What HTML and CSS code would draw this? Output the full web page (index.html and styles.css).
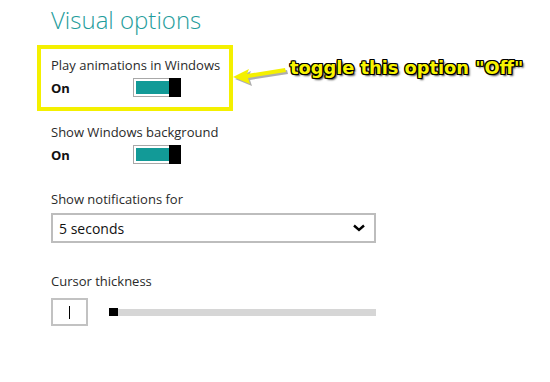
FILE: index.html
```html
<!DOCTYPE html>
<html lang="en">

<head>
    <meta charset="UTF-8">
    <meta name="viewport" content="width=device-width, initial-scale=1.0">
    <title>Visual options</title>
    <link rel="stylesheet" href="styles.css">
</head>

<body>
    <div class="page">
        <h1>Visual options</h1>

        <div class="setting">
            <div class="labl">Play animations in Windows</div>
            <div class="row">
                <div class="state">On</div>
                <div class="toggle"><div class="fill"></div><div class="thumb"></div></div>
            </div>
        </div>

        <div class="setting">
            <div class="labl">Show Windows background</div>
            <div class="row">
                <div class="state">On</div>
                <div class="toggle"><div class="fill"></div><div class="thumb"></div></div>
            </div>
        </div>

        <div class="setting">
            <div class="labl">Show notifications for</div>
            <div class="select">
                <span>5 seconds</span>
                <svg class="chev" width="12" height="8" viewBox="0 0 12 8">
                    <polyline points="1,1.5 6,6 11,1.5" fill="none" stroke="#000" stroke-width="2.4" />
                </svg>
            </div>
        </div>

        <div class="setting">
            <div class="labl cursor-labl">Cursor thickness</div>
            <div class="cursor-row">
                <div class="preview"><div class="caret"></div></div>
                <div class="slider"><div class="knob"></div></div>
            </div>
        </div>
    </div>

    <!-- annotation drawn over the screenshot -->
    <div class="note-box"></div>
    <svg class="note-arrow" width="64" height="24" viewBox="0 0 64 24">
        <g transform="translate(2,2)" fill="#6b6b6b" opacity="0.55">
            <polygon points="0,11 16,3 14,8 52,2 53,6 15,12 17,18" />
        </g>
        <polygon points="0,11 16,3 14,8 52,2 53,6 15,12 17,18" fill="#f4f000" />
    </svg>
    <div class="note-text">toggle this option "Off"</div>
</body>

</html>
```

FILE: styles.css
```css
body {
    background-color: #fff;
    margin: 0;
    font-family: 'Open Sans', 'Liberation Sans', sans-serif;
    color: #2a2a2a;
}

.page {
    padding: 4px 0 0 51px;
}

h1 {
    margin: 0 0 20px 0;
    font-size: 24px;
    line-height: 32px;
    font-weight: 300;
    color: #1f9d9c;
}

.setting {
    margin-bottom: 26px;
}

.labl {
    font-size: 13px;
    line-height: 18px;
}

.row {
    display: flex;
    align-items: center;
    margin-top: 4px;
}

.state {
    width: 82px;
    font-size: 13px;
    font-weight: 700;
    color: #111;
}

.toggle {
    display: flex;
    width: 48px;
    height: 19px;
    box-sizing: border-box;
    border: 1px solid #a8a8a8;
    border-right: none;
    background-color: #fff;
}

.fill {
    flex: 1;
    margin: 2px 0 2px 2px;
    background-color: #129a97;
}

.thumb {
    width: 12px;
    margin: -1px 0;
    background-color: #000;
}

.select {
    display: flex;
    align-items: center;
    justify-content: space-between;
    width: 325px;
    height: 30px;
    box-sizing: border-box;
    margin-top: 5px;
    padding: 0 9px 0 6px;
    border: 2px solid #bdbdbd;
    font-size: 14px;
    color: #111;
}

.chev {
    display: block;
}

.cursor-labl {
    padding-top: 3px;
}

.cursor-row {
    display: flex;
    align-items: center;
    gap: 21px;
    margin-top: 8px;
}

.preview {
    display: flex;
    justify-content: center;
    align-items: center;
    width: 37px;
    height: 28px;
    box-sizing: border-box;
    border: 2px solid #c2c2c2;
}

.caret {
    width: 1px;
    height: 13px;
    background-color: #000;
}

.slider {
    width: 267px;
    height: 7px;
    background-color: #d6d6d6;
}

.knob {
    width: 9px;
    height: 8px;
    margin-top: -1px;
    background-color: #000;
}

.note-box {
    position: absolute;
    left: 37px;
    top: 45px;
    width: 188px;
    height: 58px;
    border: 4px solid #f4f000;
}

.note-arrow {
    position: absolute;
    left: 233px;
    top: 66px;
}

.note-text {
    position: absolute;
    left: 290px;
    top: 58px;
    font-family: 'DejaVu Sans', Verdana, sans-serif;
    font-size: 17.8px;
    font-weight: 700;
    line-height: 20px;
    color: #f8f400;
    text-shadow:
        -1px -1px 0 #000, 1px -1px 0 #000, -1px 1px 0 #000, 1px 1px 0 #000,
        0 -1px 0 #000, 0 1px 0 #000, -1px 0 0 #000, 1px 0 0 #000,
        2px 2px 2px #444;
}
```
